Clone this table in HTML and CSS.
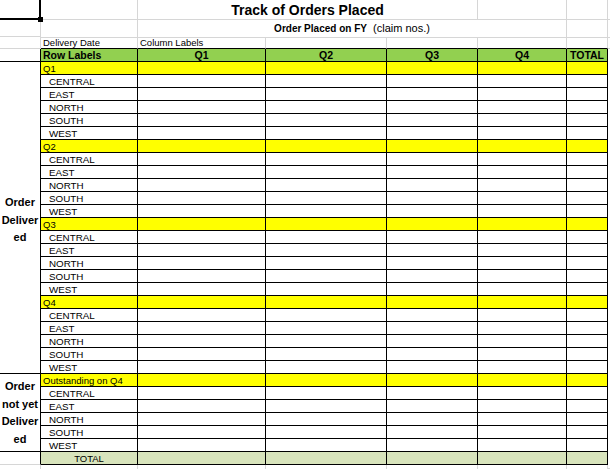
FILE: index.html
```html
<!DOCTYPE html>
<html>
<head>
<meta charset="utf-8">
<title>Track of Orders Placed</title>
<link rel="stylesheet" href="styles.css">
</head>
<body>
<div class="sheet">
  <div class="colA">
    <div class="a a1"></div>
    <div class="a a2"></div>
    <div class="a a3"></div>
    <div class="a a4"></div>
    <div class="a amerge m1">Order<br>Deliver<br>ed</div>
    <div class="a amerge m2">Order<br>not yet<br>Deliver<br>ed</div>
    <div class="a atot"></div>
    <div class="a arest"></div>
  </div>
  <div class="main">
    <div class="row r1">
      <div class="g"></div>
      <div class="g title">Track of Orders Placed</div>
      <div class="g"></div>
      <div class="g"></div>
      <div class="gh"></div>
    </div>
    <div class="row r2">
      <div class="g"></div>
      <div class="g sub"><b>Order Placed on FY</b>&nbsp; (claim nos.)</div>
      <div class="g"></div>
      <div class="gh"></div>
    </div>
    <div class="row r3">
      <div class="g gb pl">Delivery Date</div>
      <div class="g gb pl">Column Labels</div>
      <div class="g gb"></div>
      <div class="g gb"></div>
      <div class="g gb"></div>
      <div class="g gb"></div>
      <div class="gh"></div>
    </div>

    <div class="row d hdr"><div class="c pl">Row Labels</div><div class="c ctr">Q1</div><div class="c ctr">Q2</div><div class="c ctr">Q3</div><div class="c ctr">Q4</div><div class="c ctr">TOTAL</div><div class="h"></div></div>

    <div class="row d q"><div class="c pl">Q1</div><div class="c"></div><div class="c"></div><div class="c"></div><div class="c"></div><div class="c"></div><div class="h"></div></div>
    <div class="row d"><div class="c reg">CENTRAL</div><div class="c"></div><div class="c"></div><div class="c"></div><div class="c"></div><div class="c"></div><div class="h"></div></div>
    <div class="row d"><div class="c reg">EAST</div><div class="c"></div><div class="c"></div><div class="c"></div><div class="c"></div><div class="c"></div><div class="h"></div></div>
    <div class="row d"><div class="c reg">NORTH</div><div class="c"></div><div class="c"></div><div class="c"></div><div class="c"></div><div class="c"></div><div class="h"></div></div>
    <div class="row d"><div class="c reg">SOUTH</div><div class="c"></div><div class="c"></div><div class="c"></div><div class="c"></div><div class="c"></div><div class="h"></div></div>
    <div class="row d"><div class="c reg">WEST</div><div class="c"></div><div class="c"></div><div class="c"></div><div class="c"></div><div class="c"></div><div class="h"></div></div>

    <div class="row d q"><div class="c pl">Q2</div><div class="c"></div><div class="c"></div><div class="c"></div><div class="c"></div><div class="c"></div><div class="h"></div></div>
    <div class="row d"><div class="c reg">CENTRAL</div><div class="c"></div><div class="c"></div><div class="c"></div><div class="c"></div><div class="c"></div><div class="h"></div></div>
    <div class="row d"><div class="c reg">EAST</div><div class="c"></div><div class="c"></div><div class="c"></div><div class="c"></div><div class="c"></div><div class="h"></div></div>
    <div class="row d"><div class="c reg">NORTH</div><div class="c"></div><div class="c"></div><div class="c"></div><div class="c"></div><div class="c"></div><div class="h"></div></div>
    <div class="row d"><div class="c reg">SOUTH</div><div class="c"></div><div class="c"></div><div class="c"></div><div class="c"></div><div class="c"></div><div class="h"></div></div>
    <div class="row d"><div class="c reg">WEST</div><div class="c"></div><div class="c"></div><div class="c"></div><div class="c"></div><div class="c"></div><div class="h"></div></div>

    <div class="row d q"><div class="c pl">Q3</div><div class="c"></div><div class="c"></div><div class="c"></div><div class="c"></div><div class="c"></div><div class="h"></div></div>
    <div class="row d"><div class="c reg">CENTRAL</div><div class="c"></div><div class="c"></div><div class="c"></div><div class="c"></div><div class="c"></div><div class="h"></div></div>
    <div class="row d"><div class="c reg">EAST</div><div class="c"></div><div class="c"></div><div class="c"></div><div class="c"></div><div class="c"></div><div class="h"></div></div>
    <div class="row d"><div class="c reg">NORTH</div><div class="c"></div><div class="c"></div><div class="c"></div><div class="c"></div><div class="c"></div><div class="h"></div></div>
    <div class="row d"><div class="c reg">SOUTH</div><div class="c"></div><div class="c"></div><div class="c"></div><div class="c"></div><div class="c"></div><div class="h"></div></div>
    <div class="row d"><div class="c reg">WEST</div><div class="c"></div><div class="c"></div><div class="c"></div><div class="c"></div><div class="c"></div><div class="h"></div></div>

    <div class="row d q"><div class="c pl">Q4</div><div class="c"></div><div class="c"></div><div class="c"></div><div class="c"></div><div class="c"></div><div class="h"></div></div>
    <div class="row d"><div class="c reg">CENTRAL</div><div class="c"></div><div class="c"></div><div class="c"></div><div class="c"></div><div class="c"></div><div class="h"></div></div>
    <div class="row d"><div class="c reg">EAST</div><div class="c"></div><div class="c"></div><div class="c"></div><div class="c"></div><div class="c"></div><div class="h"></div></div>
    <div class="row d"><div class="c reg">NORTH</div><div class="c"></div><div class="c"></div><div class="c"></div><div class="c"></div><div class="c"></div><div class="h"></div></div>
    <div class="row d"><div class="c reg">SOUTH</div><div class="c"></div><div class="c"></div><div class="c"></div><div class="c"></div><div class="c"></div><div class="h"></div></div>
    <div class="row d"><div class="c reg">WEST</div><div class="c"></div><div class="c"></div><div class="c"></div><div class="c"></div><div class="c"></div><div class="h"></div></div>

    <div class="row d q"><div class="c pl">Outstanding on Q4</div><div class="c"></div><div class="c"></div><div class="c"></div><div class="c"></div><div class="c"></div><div class="h"></div></div>
    <div class="row d"><div class="c reg">CENTRAL</div><div class="c"></div><div class="c"></div><div class="c"></div><div class="c"></div><div class="c"></div><div class="h"></div></div>
    <div class="row d"><div class="c reg">EAST</div><div class="c"></div><div class="c"></div><div class="c"></div><div class="c"></div><div class="c"></div><div class="h"></div></div>
    <div class="row d"><div class="c reg">NORTH</div><div class="c"></div><div class="c"></div><div class="c"></div><div class="c"></div><div class="c"></div><div class="h"></div></div>
    <div class="row d"><div class="c reg">SOUTH</div><div class="c"></div><div class="c"></div><div class="c"></div><div class="c"></div><div class="c"></div><div class="h"></div></div>
    <div class="row d"><div class="c reg">WEST</div><div class="c"></div><div class="c"></div><div class="c"></div><div class="c"></div><div class="c"></div><div class="h"></div></div>

    <div class="row d tot"><div class="c ctr totlbl">TOTAL</div><div class="c"></div><div class="c"></div><div class="c"></div><div class="c"></div><div class="c"></div><div class="h"></div></div>

    <div class="row rest">
      <div class="g"></div><div class="g"></div><div class="g"></div><div class="g"></div><div class="g"></div><div class="g"></div><div class="gh"></div>
    </div>
  </div>
</div>
</body>
</html>
```

FILE: styles.css
```css
* {
  box-sizing: border-box;
  margin: 0;
  padding: 0;
}

html,
body {
  width: 610px;
  height: 469px;
  overflow: hidden;
  background: #ffffff;
}

body {
  font-family: "Liberation Sans", Arial, sans-serif;
  font-size: 9.5px;
  color: #000000;
}

.sheet {
  display: flex;
  height: 469px;
}

/* ---------- column A ---------- */
.colA {
  width: 41px;
  flex: none;
  display: flex;
  flex-direction: column;
}

.a {
  flex: none;
  border-right: 1px solid #d6d6d6;
  border-bottom: 1px solid #d6d6d6;
}

.a1 {
  height: 20px;
  position: relative;
  z-index: 2;
}

.a1::after {
  content: "";
  position: absolute;
  left: -3px;
  top: -3px;
  right: -1px;
  bottom: -1px;
  border: 2px solid #000000;
}

.a1::before {
  content: "";
  position: absolute;
  left: 38px;
  top: 17px;
  width: 5px;
  height: 5px;
  background: #000000;
  z-index: 3;
}

.a2 {
  height: 17px;
}

.a3 {
  height: 12px;
}

.a4 {
  height: 13px;
  border-right-color: #000000;
  border-bottom-color: #000000;
}

.amerge {
  border-right-color: #000000;
  border-bottom-color: #000000;
  display: flex;
  align-items: center;
  justify-content: center;
  text-align: center;
  font-weight: bold;
  font-size: 11px;
  line-height: 17.5px;
}

.m1 {
  height: 312px;
  padding-top: 6px;
}

.m2 {
  height: 78px;
  padding-top: 1px;
}

.atot {
  height: 13px;
  border-right-color: #000000;
}

.arest {
  flex: 1;
  border-bottom: none;
}

/* ---------- main area ---------- */
.main {
  flex: 1;
  display: flex;
  flex-direction: column;
  min-width: 0;
}

.row {
  flex: none;
  display: grid;
  grid-template-columns: 97px 128px 121px 91px 89px 41px 1fr;
}

.g {
  border-right: 1px solid #d6d6d6;
  border-bottom: 1px solid #d6d6d6;
  white-space: nowrap;
}

.gh {
  border-bottom: 1px solid #d6d6d6;
}

.r1 {
  height: 20px;
}

.r1 .title {
  grid-column: span 3;
  text-align: center;
  font-weight: bold;
  font-size: 14px;
  line-height: 18px;
  padding-top: 1px;
}

.r2 {
  height: 17px;
}

.r2 .sub {
  grid-column: span 4;
  text-align: center;
  font-size: 11px;
  line-height: 16px;
}

.r2 .sub b {
  font-size: 10px;
}

.r3 {
  height: 12px;
  line-height: 11px;
}

.r3 .gb {
  border-bottom-color: #000000;
}

.pl {
  padding-left: 2px;
}

/* data rows */
.d {
  height: 13px;
}

.d .c {
  border-right: 1px solid #000000;
  border-bottom: 1px solid #000000;
  padding-top: 1px;
  line-height: 11px;
  white-space: nowrap;
}

.ctr {
  text-align: center;
}

.reg {
  padding-left: 8px;
  font-size: 9.8px;
}

.hdr .c {
  background: #92d050;
  font-weight: bold;
  font-size: 10.5px;
}

.q .c {
  background: #ffff00;
}

.tot .c {
  background: #d8e4bc;
}

.totlbl {
  padding-top: 0;
}

.rest {
  flex: 1;
}

.rest .g {
  border-bottom: none;
}
```
